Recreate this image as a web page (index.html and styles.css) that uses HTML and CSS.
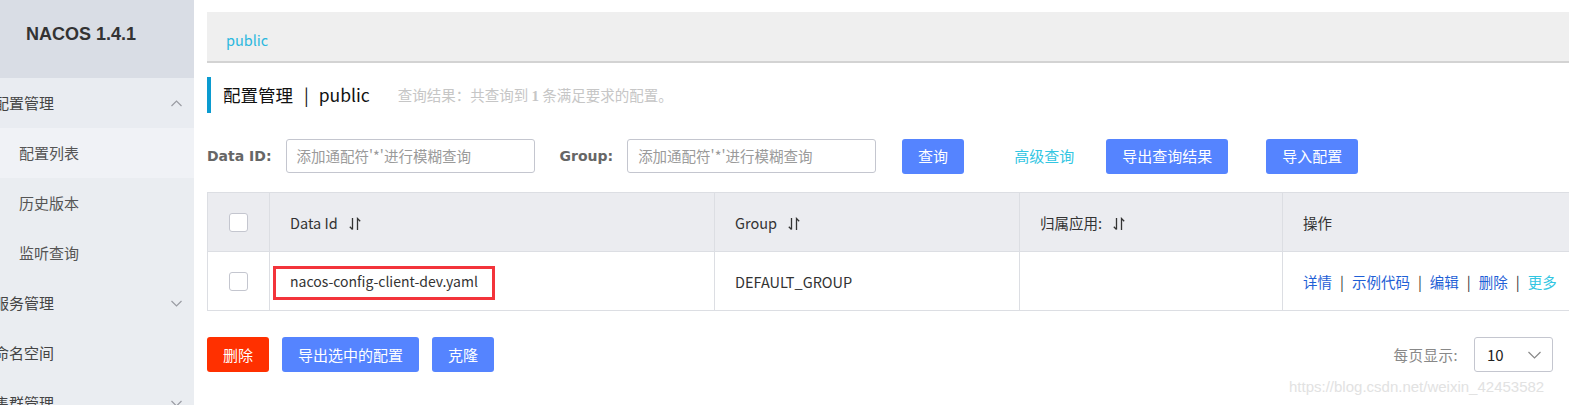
FILE: index.html
```html
<!DOCTYPE html>
<html lang="zh-CN">
<head>
<meta charset="utf-8">
<title>Nacos</title>
<link rel="stylesheet" href="styles.css">
</head>
<body>
<aside class="sidebar">
  <div class="brand">NACOS 1.4.1</div>
  <ul class="menu">
    <li class="menu-item group-open"><span class="menu-text">配置管理</span>
      <svg class="chev" width="11" height="7" viewBox="0 0 11 7"><path d="M0.5 6 L5.5 1 L10.5 6" fill="none" stroke="#9a9ca3" stroke-width="1.2"/></svg></li>
    <li class="menu-sub active">配置列表</li>
    <li class="menu-sub">历史版本</li>
    <li class="menu-sub">监听查询</li>
    <li class="menu-item"><span class="menu-text">服务管理</span>
      <svg class="chev" width="11" height="7" viewBox="0 0 11 7"><path d="M0.5 1 L5.5 6 L10.5 1" fill="none" stroke="#9a9ca3" stroke-width="1.2"/></svg></li>
    <li class="menu-item"><span class="menu-text">命名空间</span></li>
    <li class="menu-item"><span class="menu-text">集群管理</span>
      <svg class="chev" width="11" height="7" viewBox="0 0 11 7"><path d="M0.5 1 L5.5 6 L10.5 1" fill="none" stroke="#9a9ca3" stroke-width="1.2"/></svg></li>
  </ul>
</aside>
<main class="main">
  <div class="crumb"><span class="crumb-link">public</span></div>
  <div class="title-row">
    <span class="title">配置管理<span class="title-sep">|</span>public</span>
    <span class="result">查询结果：共查询到 <b>1</b> 条满足要求的配置。</span>
  </div>
  <div class="filter">
    <label class="flabel">Data ID:</label>
    <div class="input"><span class="ph">添加通配符'*'进行模糊查询</span></div>
    <label class="flabel group-label">Group:</label>
    <div class="input"><span class="ph">添加通配符'*'进行模糊查询</span></div>
    <button class="btn btn-blue btn-query">查询</button>
    <a class="adv">高级查询</a>
    <button class="btn btn-blue btn-export">导出查询结果</button>
    <button class="btn btn-blue btn-import">导入配置</button>
  </div>
  <table class="grid">
    <colgroup>
      <col class="c-check"><col class="c-id"><col class="c-group"><col class="c-app"><col class="c-op">
    </colgroup>
    <thead>
      <tr>
        <th class="cell-check"><span class="checkbox"></span></th>
        <th>Data Id <svg class="sort" width="12" height="14" viewBox="0 0 12 14"><path d="M3.5 1 V12.5 M0.8 9.8 L3.5 12.5" fill="none" stroke="#333" stroke-width="1.3"/><path d="M8.5 13 V1.5 L11.2 4.2" fill="none" stroke="#333" stroke-width="1.3"/></svg></th>
        <th>Group <svg class="sort" width="12" height="14" viewBox="0 0 12 14"><path d="M3.5 1 V12.5 M0.8 9.8 L3.5 12.5" fill="none" stroke="#333" stroke-width="1.3"/><path d="M8.5 13 V1.5 L11.2 4.2" fill="none" stroke="#333" stroke-width="1.3"/></svg></th>
        <th>归属应用: <svg class="sort" width="12" height="14" viewBox="0 0 12 14"><path d="M3.5 1 V12.5 M0.8 9.8 L3.5 12.5" fill="none" stroke="#333" stroke-width="1.3"/><path d="M8.5 13 V1.5 L11.2 4.2" fill="none" stroke="#333" stroke-width="1.3"/></svg></th>
        <th>操作</th>
      </tr>
    </thead>
    <tbody>
      <tr>
        <td class="cell-check"><span class="checkbox"></span></td>
        <td class="cell-id"><span class="mark"></span>nacos-config-client-dev.yaml</td>
        <td>DEFAULT_GROUP</td>
        <td></td>
        <td class="ops"><a>详情</a><span class="sep">|</span><a>示例代码</a><span class="sep">|</span><a>编辑</a><span class="sep">|</span><a>删除</a><span class="sep">|</span><a class="more">更多</a></td>
      </tr>
    </tbody>
  </table>
  <div class="footer">
    <div class="actions">
      <button class="btn btn-red btn-del">删除</button>
      <button class="btn btn-blue btn-exp-sel">导出选中的配置</button>
      <button class="btn btn-blue btn-clone">克隆</button>
    </div>
    <div class="pager">
      <span class="pager-label">每页显示:</span>
      <div class="select"><span>10</span><svg width="13" height="8" viewBox="0 0 13 8"><path d="M0.5 1 L6.5 7 L12.5 1" fill="none" stroke="#888" stroke-width="1.2"/></svg></div>
    </div>
  </div>
</main>
<div class="watermark">https://blog.csdn.net/weixin_42453582</div>
</body>
</html>
```
FILE: styles.css
```css
* { box-sizing: border-box; }
html, body { margin: 0; padding: 0; }
body {
  width: 1569px;
  height: 405px;
  overflow: hidden;
  display: flex;
  background: #fff;
  font-family: "Noto Sans CJK SC", "Noto Sans", sans-serif;
  font-size: 15px;
  color: #333;
  position: relative;
}
.sidebar {
  width: 194px;
  flex-shrink: 0;
  background: #eaedf1;
  height: 405px;
  overflow: hidden;
}
.brand {
  height: 78px;
  background: #d9dde5;
  display: flex;
  align-items: center;
  padding: 0 0 9px 26px;
  font-family: "Liberation Sans", Arial, sans-serif;
  font-weight: bold;
  font-size: 18px;
  color: #333;
}
.menu { list-style: none; margin: 0; padding: 0; }
.menu-item {
  height: 50px;
  display: flex;
  align-items: center;
  justify-content: space-between;
  padding-right: 12px;
  color: #444;
  font-size: 15px;
  line-height: 20px;
}
.menu-text { margin-left: -6px; }
.group-open { background: #e9ecf1; }
.menu-sub {
  height: 50px;
  display: flex;
  align-items: center;
  padding-left: 19px;
  color: #555;
  font-size: 15px;
  line-height: 20px;
}
.menu-sub.active { background: #f0f2f6; }
.chev { display: block; }

.main {
  flex: 1;
  min-width: 0;
  padding: 12px 0 0 13px;
  overflow: hidden;
}
.crumb {
  height: 51px;
  background: #efefef;
  border-bottom: 2px solid #d3d3d3;
  display: flex;
  align-items: center;
  padding: 7px 0 0 19px;
}
.crumb-link { color: #2cb8de; font-size: 14.5px; line-height: 20px; }

.title-row {
  margin-top: 14px;
  height: 36px;
  border-left: 4px solid #0b9bd0;
  padding-left: 12px;
  display: flex;
  align-items: center;
}
.title { font-size: 17.5px; color: #111; line-height: 24px; }
.title-sep { margin: 0 10px 0 11px; }
.result { margin-left: 28px; color: #c6c6c6; font-size: 14.5px; line-height: 20px; }
.result b { font-family: "Liberation Serif", serif; font-size: 15px; }

.filter {
  margin-top: 26px;
  height: 34px;
  display: flex;
  align-items: center;
}
.flabel {
  font-family: "DejaVu Sans", Verdana, sans-serif;
  font-weight: bold;
  font-size: 14px;
  color: #666;
  margin-right: 14px;
}
.group-label { margin-left: 25px; margin-right: 14px; }
.input {
  width: 249px;
  height: 34px;
  border: 1px solid #c4c6cf;
  border-radius: 3px;
  display: flex;
  align-items: center;
  padding-left: 10px;
}
.ph { color: #9a9a9a; font-size: 14.5px; line-height: 20px; white-space: nowrap; }
.btn {
  height: 35px;
  border: none;
  border-radius: 3px;
  color: #fff;
  font-family: "Noto Sans CJK SC", sans-serif;
  font-size: 15px;
  line-height: 20px;
  padding: 0;
  cursor: pointer;
}
.btn-blue { background: #5584ff; }
.btn-red { background: #ff3000; }
.btn-query { width: 62px; margin-left: 26px; }
.adv { color: #33c6e2; font-size: 15px; margin-left: 50px; line-height: 20px; }
.btn-export { width: 122px; margin-left: 32px; }
.btn-import { width: 92px; margin-left: 38px; }

.grid {
  margin-top: 19px;
  width: 1420px;
  border-collapse: collapse;
  table-layout: fixed;
}
.c-check { width: 62px; }
.c-id { width: 445px; }
.c-group { width: 305px; }
.c-app { width: 263px; }
.grid th, .grid td {
  border: 1px solid #dcdee3;
  height: 59px;
  padding: 0 0 0 20px;
  text-align: left;
  font-weight: normal;
  font-size: 14.5px;
  color: #333;
  white-space: nowrap;
}
.grid th { background: #ebecf0; }
.grid .cell-check { padding: 0 0 0 21px; }
.checkbox {
  display: block;
  width: 19px;
  height: 19px;
  border: 1px solid #c4c6cf;
  border-radius: 3px;
  background: #fff;
}
.sort { vertical-align: -2px; margin-left: 8px; }
.cell-id { position: relative; font-size: 14px !important; }
.mark {
  position: absolute;
  left: 3px;
  top: 14px;
  width: 222px;
  height: 34px;
  border: 3px solid #f3343b;
}
.ops a { color: #1f5fd6; }
.ops .more { color: #33c6e2; }
.sep { color: #333; margin: 0 8px; }

.footer {
  margin-top: 26px;
  display: flex;
  justify-content: space-between;
  align-items: center;
}
.actions { display: flex; }
.btn-del { width: 62px; }
.btn-exp-sel { width: 137px; margin-left: 13px; }
.btn-clone { width: 62px; margin-left: 13px; }
.pager { display: flex; align-items: center; margin-right: 16px; }
.pager-label { color: #888; font-size: 14.5px; margin-right: 16px; letter-spacing: 0.5px; }
.select {
  width: 79px;
  height: 35px;
  border: 1px solid #c4c6cf;
  border-radius: 3px;
  display: flex;
  align-items: center;
  justify-content: space-between;
  padding: 0 11px 0 12px;
  font-size: 15px;
  color: #222;
}
.watermark {
  position: absolute;
  left: 1289px;
  top: 378px;
  font-family: "Liberation Sans", Arial, sans-serif;
  font-size: 15px;
  line-height: 18px;
  color: #e2e2e2;
  white-space: nowrap;
}
```
